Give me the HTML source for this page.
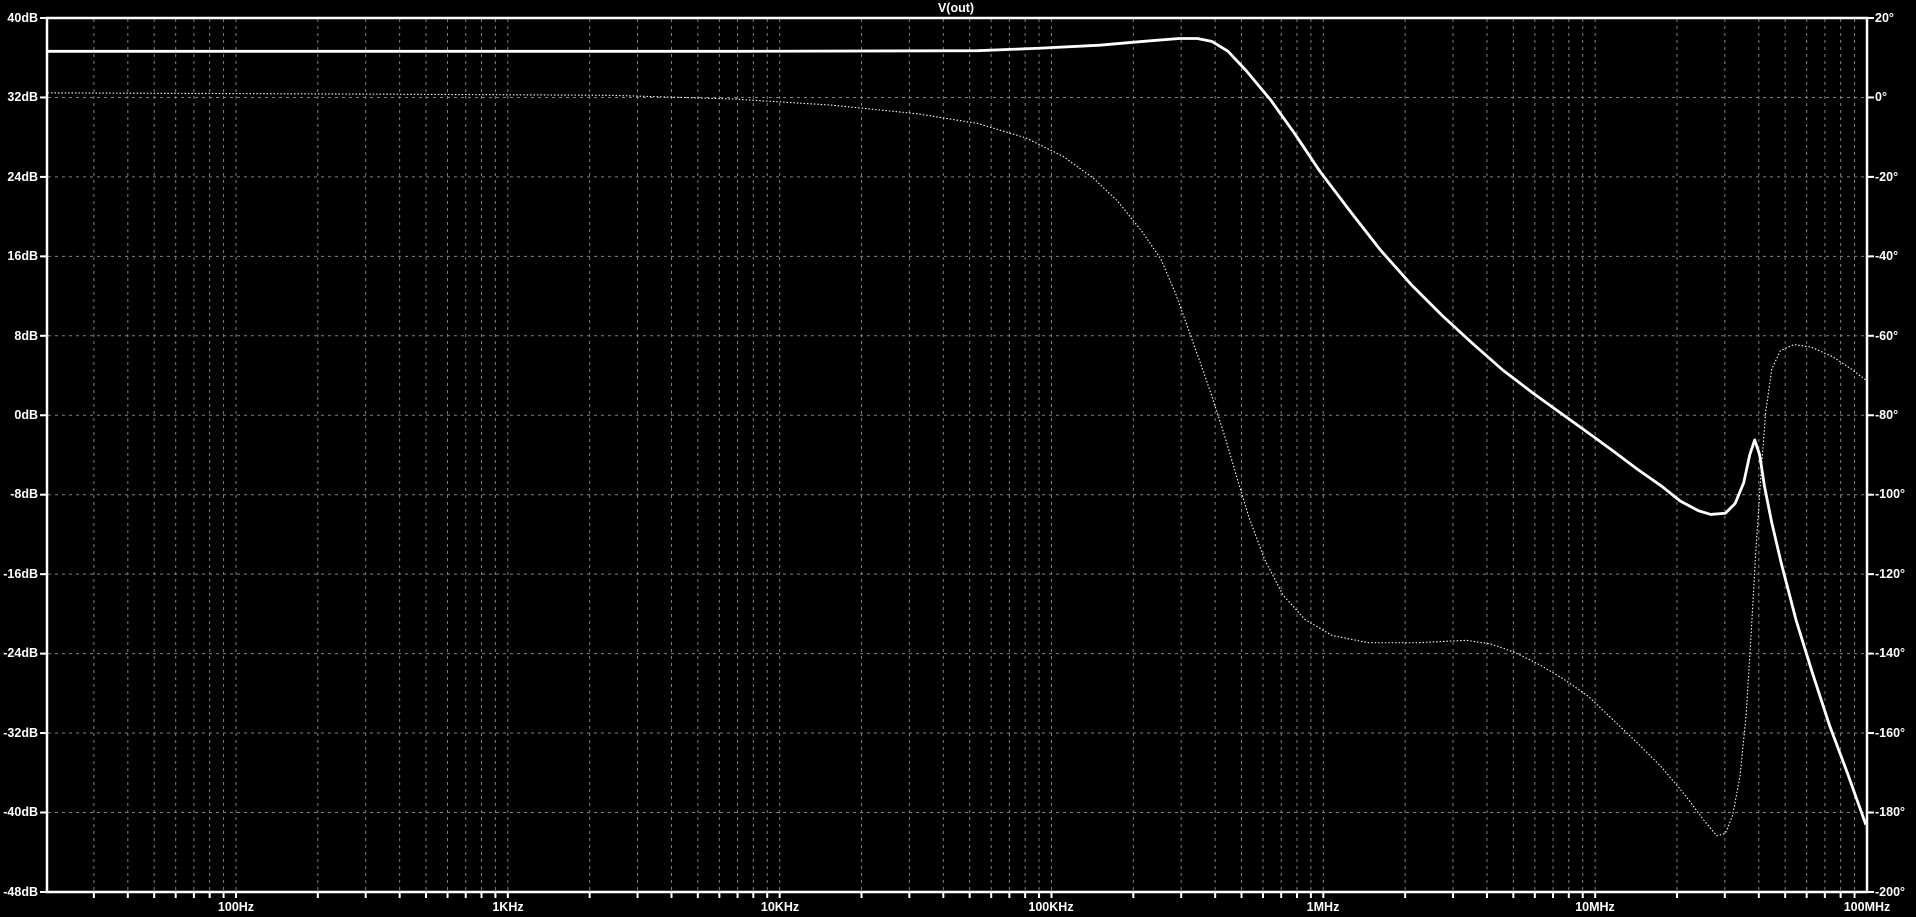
<!DOCTYPE html>
<html><head><meta charset="utf-8"><style>
html,body{margin:0;padding:0;background:#000;width:1916px;height:917px;overflow:hidden}
svg{display:block}
text{font-family:"Liberation Sans",sans-serif;font-weight:bold;font-size:12.5px;fill:#fff}
</style></head><body>
<svg id="s" width="1916" height="917" viewBox="0 0 1916 917" xmlns="http://www.w3.org/2000/svg">
<g id="grid" stroke="#808080" stroke-width="1" stroke-dasharray="3,4"></g>
<g id="ticks" stroke="#fff" stroke-width="2"></g>
<rect x="47" y="18" width="1820" height="874" fill="none" stroke="#fff" stroke-width="2.5"/>
<text x="956" y="12" text-anchor="middle">V(out)</text>
<g text-anchor="end">
<text x="38" y="22">40dB</text><text x="38" y="101">32dB</text><text x="38" y="181">24dB</text><text x="38" y="260">16dB</text><text x="38" y="340">8dB</text><text x="38" y="419">0dB</text><text x="38" y="498">-8dB</text><text x="38" y="578">-16dB</text><text x="38" y="657">-24dB</text><text x="38" y="737">-32dB</text><text x="38" y="816">-40dB</text><text x="38" y="896">-48dB</text>
</g>
<g>
<text x="1875" y="22">20°</text><text x="1875" y="101">0°</text><text x="1875" y="181">-20°</text><text x="1875" y="260">-40°</text><text x="1875" y="340">-60°</text><text x="1875" y="419">-80°</text><text x="1875" y="498">-100°</text><text x="1875" y="578">-120°</text><text x="1875" y="657">-140°</text><text x="1875" y="737">-160°</text><text x="1875" y="816">-180°</text><text x="1875" y="896">-200°</text>
</g>
<g text-anchor="middle">
<text x="236" y="911">100Hz</text><text x="508" y="911">1KHz</text><text x="780" y="911">10KHz</text><text x="1051" y="911">100KHz</text><text x="1323" y="911">1MHz</text><text x="1595" y="911">10MHz</text><text x="1867" y="911">100MHz</text>
</g>
<g transform="scale(1.22194)" fill="none" stroke="#fff">
<polyline stroke-width="2.3" stroke-linejoin="round" points="39,42 600,42 800,41.5 850,39.5 900,37 940,33.5 965,31.5 980,31.5 992,34 1005,42 1020,58 1040,82 1060,110 1080,140 1105,173 1130,205 1155,233 1180,258 1205,281 1230,303 1255,322 1280,340 1305,358 1320,369 1340,384 1360,398 1375,410 1390,418 1400,421 1412,420 1420,412 1427,395 1432,372 1436,360 1440,372 1444,398 1450,428 1458,462 1470,508 1483,550 1497,593 1512,633 1527,675"/>
<polyline stroke-width="0.9" stroke-dasharray="1.2,1.6" points="39,76 300,77 500,78 600,81 680,86 750,93 800,101 840,113 870,128 895,146 915,165 935,190 950,212 962,240 972,268 982,296 992,325 1002,356 1012,390 1022,423 1035,458 1050,487 1068,507 1090,520 1120,526 1160,526 1200,524 1220,527 1240,534 1260,544 1280,556 1300,570 1320,589 1340,608 1360,628 1380,652 1395,672 1405,684 1412,682 1418,667 1424,635 1429,585 1433,520 1437,450 1441,390 1445,337 1450,302 1457,287 1468,282 1482,284 1500,292 1515,302 1527,311"/>
</g>
</svg>
<script>
var g=document.getElementById('grid'),t=document.getElementById('ticks'),ns='http://www.w3.org/2000/svg';
function ln(p,x1,y1,x2,y2){var l=document.createElementNS(ns,'line');l.setAttribute('x1',x1);l.setAttribute('y1',y1);l.setAttribute('x2',x2);l.setAttribute('y2',y2);p.appendChild(l);}
var D=271.83,X0=236;
for(var d=1;d<=7;d++){for(var k=1;k<10;k++){var f=d+Math.log10(k);var x=X0+(f-2)*D;if(x<=48||x>=1866)continue;ln(g,x,19,x,891);ln(t,x,892,x,898);}}
for(var i=1;i<11;i++){var y=18+79.45*i;ln(g,48,y,1866,y);ln(t,40,y,47,y);ln(t,1867,y,1874,y);}
ln(t,40,18,47,18);ln(t,40,892,47,892);ln(t,1867,18,1874,18);ln(t,1867,892,1874,892);
</script>
</body></html>
